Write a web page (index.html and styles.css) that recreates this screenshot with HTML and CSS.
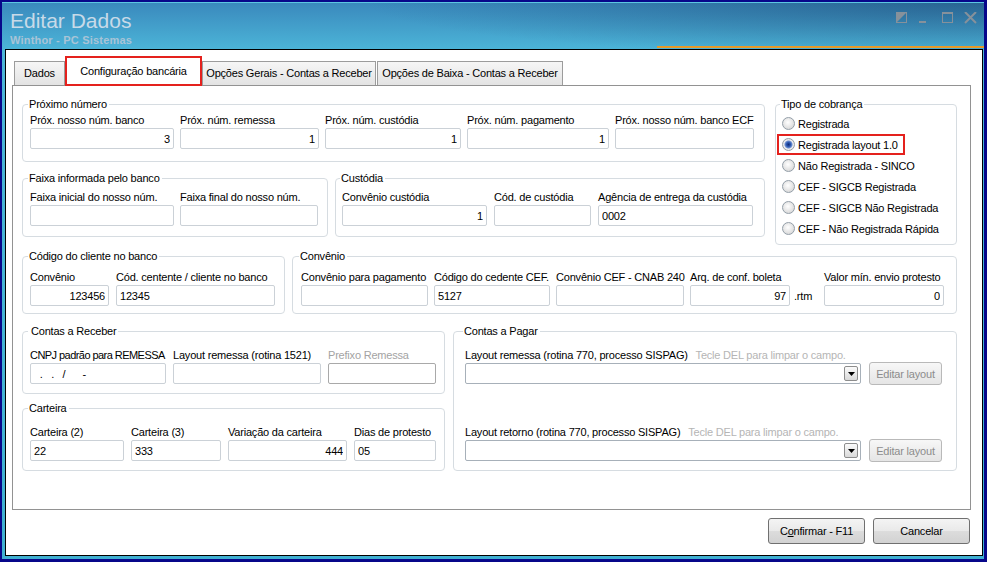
FILE: index.html
```html
<html>
<head>
<meta charset="utf-8">
<link rel="stylesheet" href="styles.css">
</head>
<body>
<div class="window">
    <div class="titlebar">
        <div>
            <h1 class="title">Editar Dados</h1>
            <div class="subtitle">Winthor - PC Sistemas</div>
        </div>
        <svg class="win-buttons" width="81" height="12" viewBox="0 0 81 12">
            <rect x="0.5" y="0.5" width="10" height="10" fill="none" stroke="#86919b"/>
            <path d="M0 0H11L0 11Z" fill="#86919b"/>
            <rect x="23" y="9" width="7" height="2" fill="#86919b"/>
            <rect x="46.5" y="0.5" width="10" height="10" fill="none" stroke="#86919b"/>
            <rect x="46" y="0" width="11" height="2" fill="#86919b"/>
            <path d="M69 0L80 11M80 0L69 11" stroke="#86919b" stroke-width="2"/>
        </svg>
    </div>

    <div class="content">
        <div class="tabs">
            <div class="tab tab-dados">Dados</div>
            <div class="tab tab-active">Configuração bancária</div>
            <div class="tab tab-gerais">Opções Gerais - Contas a Receber</div>
            <div class="tab tab-baixa">Opções de Baixa - Contas a Receber</div>
        </div>

        <div class="panel">
            <div class="row row-1">
                <div class="stack stack-1">
                    <fieldset class="grp grp-proximo">
                        <legend>Próximo número</legend>
                        <div class="fields cols-proximo">
                            <div><label>Próx. nosso núm. banco</label><input class="inp num" value="3"></div>
                            <div><label>Próx. núm. remessa</label><input class="inp num" value="1"></div>
                            <div><label>Próx. núm. custódia</label><input class="inp num" value="1"></div>
                            <div><label>Próx. núm. pagamento</label><input class="inp num" value="1"></div>
                            <div><label>Próx. nosso núm. banco ECF</label><input class="inp num" value=""></div>
                        </div>
                    </fieldset>
                    <div class="row row-1b">
                        <fieldset class="grp grp-faixa">
                            <legend>Faixa informada pelo banco</legend>
                            <div class="fields cols-faixa">
                                <div><label>Faixa inicial do nosso núm.</label><input class="inp" value=""></div>
                                <div><label>Faixa final do nosso núm.</label><input class="inp" value=""></div>
                            </div>
                        </fieldset>
                        <fieldset class="grp grp-custodia">
                            <legend>Custódia</legend>
                            <div class="fields cols-custodia">
                                <div><label>Convênio custódia</label><input class="inp num" value="1"></div>
                                <div><label>Cód. de custódia</label><input class="inp" value=""></div>
                                <div><label>Agência de entrega da custódia</label><input class="inp" value="0002"></div>
                            </div>
                        </fieldset>
                    </div>
                </div>

                <fieldset class="grp grp-tipo">
                    <legend>Tipo de cobrança</legend>
                    <label class="radio"><input type="radio" name="tipo">Registrada</label>
                    <label class="radio radio-mark"><input type="radio" name="tipo" checked>Registrada layout 1.0</label>
                    <label class="radio"><input type="radio" name="tipo">Não Registrada - SINCO</label>
                    <label class="radio"><input type="radio" name="tipo">CEF - SIGCB Registrada</label>
                    <label class="radio"><input type="radio" name="tipo">CEF - SIGCB Não Registrada</label>
                    <label class="radio"><input type="radio" name="tipo">CEF - Não Registrada Rápida</label>
                </fieldset>
            </div>

            <div class="row row-2">
                <fieldset class="grp grp-codigo">
                    <legend>Código do cliente no banco</legend>
                    <div class="fields cols-codigo">
                        <div><label>Convênio</label><input class="inp num" value="123456"></div>
                        <div><label>Cód. centente / cliente no banco</label><input class="inp" value="12345"></div>
                    </div>
                </fieldset>
                <fieldset class="grp grp-convenio">
                    <legend>Convênio</legend>
                    <div class="fields cols-convenio">
                        <div><label>Convênio para pagamento</label><input class="inp" value=""></div>
                        <div><label>Código do cedente CEF.</label><input class="inp" value="5127"></div>
                        <div><label>Convênio CEF - CNAB 240</label><input class="inp" value=""></div>
                        <div>
                            <label>Arq. de conf. boleta</label>
                            <div class="with-suffix"><input class="inp num inp-short" value="97"><span class="suffix">.rtm</span></div>
                        </div>
                        <div><label>Valor mín. envio protesto</label><input class="inp num" value="0"></div>
                    </div>
                </fieldset>
            </div>

            <div class="row row-3">
                <div class="stack stack-3">
                    <fieldset class="grp grp-receber">
                        <legend>Contas a Receber</legend>
                        <div class="fields cols-receber">
                            <div><label class="tight">CNPJ padrão para REMESSA</label><input class="inp mask" value="  .   .   /      -"></div>
                            <div><label>Layout remessa (rotina 1521)</label><input class="inp" value=""></div>
                            <div><label class="off">Prefixo Remessa</label><input class="inp" value="" disabled></div>
                        </div>
                    </fieldset>
                    <fieldset class="grp grp-carteira">
                        <legend>Carteira</legend>
                        <div class="fields cols-carteira">
                            <div><label>Carteira (2)</label><input class="inp" value="22"></div>
                            <div><label>Carteira (3)</label><input class="inp" value="333"></div>
                            <div><label>Variação da carteira</label><input class="inp num" value="444"></div>
                            <div><label>Dias de protesto</label><input class="inp" value="05"></div>
                        </div>
                    </fieldset>
                </div>

                <fieldset class="grp grp-pagar">
                    <legend>Contas a Pagar</legend>
                    <div class="layout-row">
                        <label>Layout remessa (rotina 770, processo SISPAG) <span class="hint">Tecle DEL para limpar o campo.</span></label>
                        <div class="combo-line">
                            <div class="combo"><span class="combo-btn"><svg width="7" height="4" viewBox="0 0 7 4"><path d="M0 0H7L3.5 4Z" fill="#000"/></svg></span></div>
                            <button class="btn-small" disabled>Editar layout</button>
                        </div>
                    </div>
                    <div class="layout-row layout-row-2">
                        <label>Layout retorno (rotina 770, processo SISPAG) <span class="hint">Tecle DEL para limpar o campo.</span></label>
                        <div class="combo-line">
                            <div class="combo"><span class="combo-btn"><svg width="7" height="4" viewBox="0 0 7 4"><path d="M0 0H7L3.5 4Z" fill="#000"/></svg></span></div>
                            <button class="btn-small" disabled>Editar layout</button>
                        </div>
                    </div>
                </fieldset>
            </div>
        </div>

        <div class="actions">
            <button class="btn">C<u>o</u>nfirmar - F11</button>
            <button class="btn">Cancelar</button>
        </div>
    </div>
</div>
</body>
</html>
```

FILE: styles.css
```css
body {
    margin: 0;
    padding: 2px 3px 3px 2px;
    background: #07078a;
    font-family: "Liberation Sans", Arial, sans-serif;
    font-size: 11px;
    letter-spacing: -0.2px;
    color: #000;
}

.window {
    height: 557px;
    display: flex;
    flex-direction: column;
    border-top: 1px solid #5cc6e2;
    box-sizing: border-box;
    background: linear-gradient(to bottom, #3a89bd 0px, #4cb5d8 47px, #3fb0d2 100%);
}

.titlebar {
    height: 46px;
    box-sizing: border-box;
    padding: 6px 7px 0 8px;
    display: flex;
    justify-content: space-between;
    align-items: flex-start;
    background:
        linear-gradient(#e59a2a, #e59a2a) right 0 bottom 1px / 327px 2px no-repeat,
        radial-gradient(90% 170% at 100% 0%, rgba(20, 55, 95, 0.45), rgba(20, 55, 95, 0) 70%);
}

.title {
    margin: 0;
    font-size: 21px;
    line-height: 24px;
    font-weight: normal;
    letter-spacing: 0;
    color: #c8dae8;
}

.subtitle {
    margin-top: 1px;
    font-size: 11px;
    line-height: 13px;
    font-weight: bold;
    letter-spacing: 0.2px;
    color: #a8c4d7;
}

.win-buttons {
    margin-top: 3px;
}

.content {
    flex: 1;
    margin: 0 1px 3px 3px;
    border: 1px solid #000;
    background: #fff;
    padding: 6px 0 0 6px;
    display: flex;
    flex-direction: column;
}

/* abas */
.tabs {
    height: 29px;
    margin-left: 2px;
    display: flex;
    align-items: flex-end;
}

.tab {
    box-sizing: border-box;
    height: 24px;
    line-height: 22px;
    text-align: center;
    white-space: nowrap;
    border: 1px solid #9c9c9c;
    border-bottom: none;
    background: linear-gradient(#f6f6f6, #e3e3e3);
}

.tab-dados { width: 51px; }
.tab-gerais { width: 174px; }
.tab-baixa { width: 186px; margin-left: 1px; }

.tab-active {
    width: 137px;
    height: 30px;
    line-height: 26px;
    margin-bottom: -1px;
    position: relative;
    z-index: 1;
    background: #fff;
    border: 2px solid #e4211d;
}

.panel {
    box-sizing: border-box;
    height: 425px;
    margin-right: 11px;
    border: 1px solid #929292;
    padding: 11px 0 0 9px;
}

/* grupos */
.row {
    display: grid;
}

.row-1 { grid-template-columns: 743px 182px; column-gap: 10px; }
.row-1b { grid-template-columns: 306px 430px; column-gap: 7px; }
.row-2 { grid-template-columns: 263px 665px; column-gap: 7px; margin-top: 4px; }
.row-3 { grid-template-columns: 423px 504px; column-gap: 8px; margin-top: 10px; }

.stack {
    display: flex;
    flex-direction: column;
}

.stack-1 { gap: 9px; }
.stack-3 { gap: 7px; }

.grp {
    margin: 0;
    min-width: 0;
    border: 1px solid #d6dce1;
    border-radius: 4px;
    padding: 5px 6px 10px 7px;
}

.grp legend {
    margin-left: -2px;
    padding: 0 2px 0 1px;
    line-height: 14px;
}

.grp-proximo { padding-top: 2px; padding-bottom: 12px; }
.grp-custodia { padding-left: 6px; }
.grp-codigo { padding-top: 7px; padding-bottom: 7px; }
.grp-convenio { padding: 7px 6px 7px 8px; }
.grp-receber { padding-top: 10px; padding-bottom: 9px; }
.grp-receber legend { padding-left: 3px; }
.grp-carteira { padding-top: 10px; padding-bottom: 9px; }
.grp-pagar { padding: 10px 6px 9px 11px; }
.grp-tipo { padding: 2px 6px 5px 6px; }

.fields {
    display: grid;
    column-gap: 6px;
}

.cols-proximo { grid-template-columns: 144px 139px 136px 142px 139px; }
.cols-faixa { grid-template-columns: 144px 138px; }
.cols-custodia { grid-template-columns: 145px 97px 155px; column-gap: 7px; }
.cols-codigo { grid-template-columns: 79px 159px; column-gap: 7px; }
.cols-convenio { grid-template-columns: 127px 116px 128px 128px 120px; }
.cols-receber { grid-template-columns: 136px 148px 108px; column-gap: 7px; }
.cols-carteira { grid-template-columns: 94px 90px 119px 82px; column-gap: 7px; }

.fields label,
.layout-row label {
    display: block;
    line-height: 15px;
    white-space: nowrap;
}

label.tight {
    letter-spacing: -0.55px;
}

label.off {
    color: #a3a3a3;
}

.inp {
    display: block;
    box-sizing: border-box;
    width: 100%;
    height: 21px;
    margin: 0;
    padding: 0 3px 0 3px;
    border: 1px solid #cbd1d7;
    border-radius: 2px;
    background: #fff;
    color: #000;
    font: inherit;
    letter-spacing: inherit;
    outline: none;
}

.inp.num { text-align: right; }
.inp.mask { white-space: pre; }

.inp:disabled {
    border-color: #a9a9a9;
    background: #fff;
}

.with-suffix {
    display: flex;
    align-items: center;
}

.inp-short {
    width: 100px;
}

.suffix {
    margin-left: 4px;
}

/* tipo de cobranca */
.radio {
    display: flex;
    align-items: center;
    width: fit-content;
    height: 21px;
    gap: 3px;
    white-space: nowrap;
}

.radio input {
    appearance: none;
    -webkit-appearance: none;
    width: 13px;
    height: 13px;
    margin: 0;
    border: 1px solid #939ea8;
    border-radius: 50%;
    background: radial-gradient(circle at 45% 40%, #ffffff 0, #e9e9e9 45%, #cdcdcd 100%);
}

.radio input:checked {
    background: radial-gradient(circle, #102c78 0, #2a55ad 2px, #6b8fd2 3.5px, #eeeeee 4.5px, #d2d2d2 100%);
}

.radio-mark {
    margin-left: -5px;
    padding: 0 7px 0 5px;
    box-shadow: inset 0 0 0 2px #e4211d;
}

/* contas a pagar */
.hint {
    color: #b5b5b5;
    margin-left: 5px;
}

.combo-line {
    height: 21px;
    display: flex;
    align-items: center;
}

.combo {
    box-sizing: border-box;
    width: 396px;
    height: 21px;
    border: 1px solid #a7b0b9;
    border-radius: 2px;
    display: flex;
    justify-content: flex-end;
    align-items: center;
    padding-right: 2px;
}

.combo-btn {
    box-sizing: border-box;
    width: 14px;
    height: 15px;
    border: 1px solid #8d8d8d;
    border-radius: 2px;
    background: linear-gradient(#fbfbfb, #d9d9d9);
    display: flex;
    justify-content: center;
    align-items: center;
}

.btn-small {
    flex: none;
    margin-left: 8px;
    width: 73px;
    height: 23px;
    padding: 0;
    border: 1px solid #b9b9b9;
    border-radius: 3px;
    background: linear-gradient(#f7f7f7, #e5e5e5);
    color: #8c8c8c;
    font: inherit;
    letter-spacing: inherit;
}

.layout-row-2 {
    margin-top: 41px;
}

/* botoes */
.actions {
    display: flex;
    justify-content: flex-end;
    gap: 8px;
    margin-top: 8px;
    padding-right: 12px;
}

.btn {
    width: 97px;
    height: 26px;
    padding: 0;
    border: 1px solid #707070;
    border-radius: 3px;
    background: linear-gradient(#f4f4f4, #e9e9e9 50%, #dcdcdc 51%, #d2d2d2);
    color: #000;
    font: inherit;
    letter-spacing: inherit;
}
```
